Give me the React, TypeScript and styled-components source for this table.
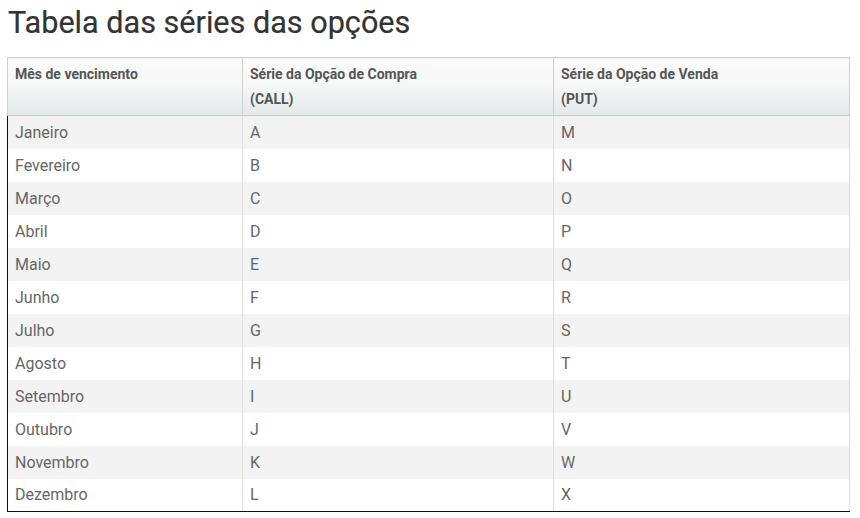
import styled, { createGlobalStyle } from "styled-components"

const GlobalStyle = createGlobalStyle`
    body {
        margin: 0;
        background: #fff;
        font-family: Roboto, "Liberation Sans", Arial, sans-serif;
    }
`

const Page = styled.main`
    padding: 0 11px 0 7px;
`

const Title = styled.h1`
    margin: 0;
    padding: 4px 0 0 1px;
    height: 57px;
    box-sizing: border-box;
    font-size: 30.6px;
    font-weight: 400;
    color: #333;
    line-height: 38px;
    -webkit-text-stroke: 0.2px #333;
`

const Table = styled.table`
    width: 842px;
    border-collapse: collapse;
    table-layout: fixed;
`

const HeadCell = styled.th<{ $w: number }>`
    width: ${(p) => p.$w}px;
    height: 57px;
    box-sizing: border-box;
    padding: 4px 7px 3px;
    vertical-align: top;
    text-align: left;
    font-size: 14px;
    font-weight: 700;
    line-height: 25px;
    color: #555;
    background: linear-gradient(to bottom, #fbfbfb 0%, #f5f6f6 50%, #e4e9e9 100%);
    border: 1px solid #cfcfcf;
    border-bottom-color: #c4cad0;
`

const Row = styled.tr<{ $odd: boolean }>`
    background: ${(p) => (p.$odd ? "#f3f3f3" : "#fff")};
    &:last-child td {
        border-bottom: 1px solid #111;
    }
`

const Cell = styled.td`
    height: 33px;
    box-sizing: border-box;
    padding: 0 7px;
    font-size: 16px;
    color: #666;
    border-left: 1px solid #ddd;
    border-right: 1px solid #ddd;
    &:first-child {
        border-left: 1px solid #111;
    }
`

const rows = [
    ["Janeiro", "A", "M"],
    ["Fevereiro", "B", "N"],
    ["Março", "C", "O"],
    ["Abril", "D", "P"],
    ["Maio", "E", "Q"],
    ["Junho", "F", "R"],
    ["Julho", "G", "S"],
    ["Agosto", "H", "T"],
    ["Setembro", "I", "U"],
    ["Outubro", "J", "V"],
    ["Novembro", "K", "W"],
    ["Dezembro", "L", "X"],
]

export default function App() {
    return (
        <Page>
            <GlobalStyle />
            <Title>Tabela das séries das opções</Title>
            <Table>
                <thead>
                    <tr>
                        <HeadCell $w={235}>Mês de vencimento</HeadCell>
                        <HeadCell $w={311}>Série da Opção de Compra<br />(CALL)</HeadCell>
                        <HeadCell $w={296}>Série da Opção de Venda<br />(PUT)</HeadCell>
                    </tr>
                </thead>
                <tbody>
                    {rows.map((r, i) => (
                        <Row key={r[0]} $odd={i % 2 === 0}>
                            <Cell>{r[0]}</Cell>
                            <Cell>{r[1]}</Cell>
                            <Cell>{r[2]}</Cell>
                        </Row>
                    ))}
                </tbody>
            </Table>
        </Page>
    )
}
